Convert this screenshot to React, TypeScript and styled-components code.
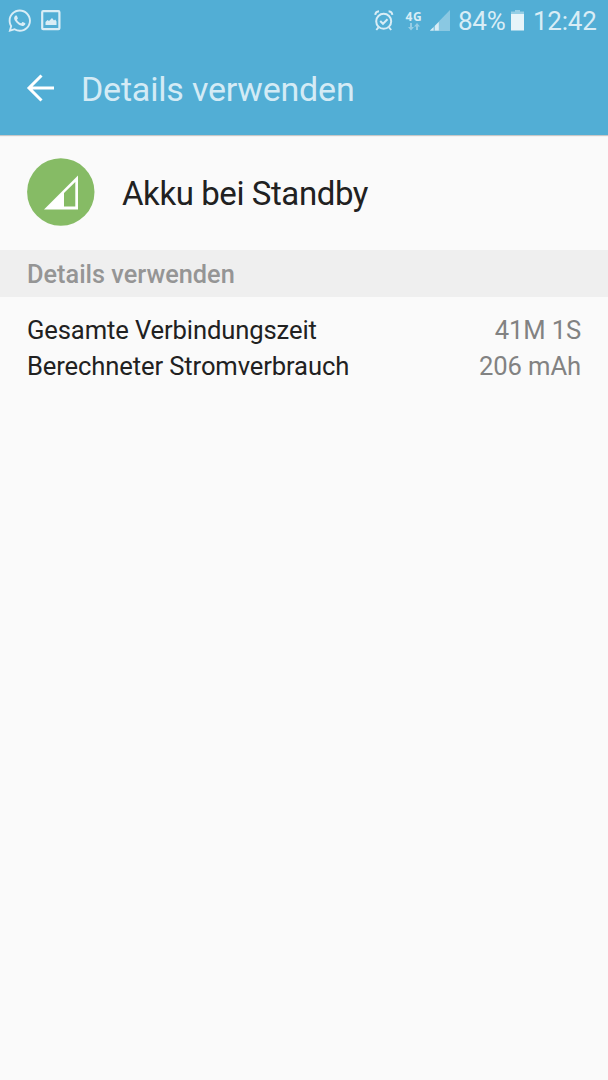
import React from 'react';
import styled, { createGlobalStyle } from 'styled-components';
import { FaWhatsapp } from 'react-icons/fa';

const GlobalStyle = createGlobalStyle`
  * { box-sizing: border-box; }
  body { margin: 0; background: #fafafa; font-family: Roboto, 'Liberation Sans', sans-serif; }
`;

const Screen = styled.main`
  display: flex;
  flex-direction: column;
  width: 608px;
  height: 1080px;
  overflow: hidden;
  background: #fafafa;
  white-space: nowrap;
`;

const Header = styled.header`
  flex: none;
  height: 135px;
  background: #52aed5;
  box-shadow: 0 1px 1px rgba(0, 0, 0, 0.2);
`;

const StatusBar = styled.div`
  display: flex;
  justify-content: space-between;
  height: 42px;
  padding: 0 12px 0 7px;
  color: #d9edf6;
`;

const StatusGroup = styled.div`
  display: flex;
  align-items: center;
  height: 41px;
  svg { display: block; flex: none; }
`;

const PhotoIcon = styled.svg`
  margin: 0 0 1px 8px;
`;

const Network = styled.div`
  display: flex;
  flex-direction: column;
  align-items: center;
  width: 18px;
  margin: 0 7px 0 11px;
  font: 700 12px/13px 'Open Sans', sans-serif;
  letter-spacing: 0.6px;
`;

const StatusText = styled.span<{ $width: number }>`
  width: ${({ $width }) => $width}px;
  font-size: 26px;
  line-height: 30px;
  letter-spacing: -0.25px;
  padding-top: 1px;
`;

const AppBar = styled.div`
  display: flex;
  align-items: center;
  height: 93px;
  padding-left: 26px;
`;

const BackButton = styled.button`
  display: flex;
  width: 55px;
  padding: 0 0 1px;
  border: 0;
  background: none;
`;

const Title = styled.h1`
  margin: 0;
  font-size: 34px;
  line-height: 40px;
  font-weight: 400;
  letter-spacing: -0.2px;
  color: #d4ebf5;
`;

const AppEntry = styled.section`
  display: flex;
  align-items: center;
  flex: none;
  height: 115px;
  padding: 0 0 1px 27px;
  gap: 27px;
`;

const AppName = styled.h2`
  margin: 3px 0 0;
  font-size: 33px;
  line-height: 38px;
  font-weight: 400;
  letter-spacing: -0.42px;
  color: #212121;
`;

const SectionHeading = styled.h3`
  flex: none;
  height: 47px;
  margin: 0;
  padding: 2px 27px 0;
  background: #efefef;
  color: #959595;
  font-size: 25.3px;
  line-height: 46px;
  font-weight: 500;
`;

const Details = styled.dl`
  margin: 0;
  padding: 15px 27px 0;
`;

const DetailRow = styled.div`
  display: flex;
  justify-content: space-between;
  font-size: 25.6px;
  line-height: 36px;
  letter-spacing: -0.12px;
`;

const Label = styled.dt`
  color: #212121;
`;

const Value = styled.dd`
  margin: 0;
  color: #828282;
`;

const rows = [
  { label: 'Gesamte Verbindungszeit', value: '41M 1S' },
  { label: 'Berechneter Stromverbrauch', value: '206 mAh' },
];

export default function App() {
  return (
    <Screen>
      <GlobalStyle />
      <Header>
        <StatusBar>
          <StatusGroup>
            <FaWhatsapp size={25.5} />
            <PhotoIcon width="20" height="22" viewBox="0 0 20 22">
              <rect x="1.2" y="2.2" width="17.2" height="18" rx="1" fill="none" stroke="currentColor" strokeWidth="2.2" />
              <path d="M4.5 16v-3l2-2 1.5 1 3-3 2 2.5 1.2-1 1.3 2V16z" fill="currentColor" />
            </PhotoIcon>
          </StatusGroup>
          <StatusGroup>
            <svg width="20" height="24" viewBox="0 0 20 24" fill="none" stroke="currentColor">
              <circle cx="9.7" cy="12.3" r="7.5" strokeWidth="2" />
              <path d="M6.2 12l2.8 2.8 4.5-4.5" strokeWidth="2" />
              <path d="M1.2 5.8Q1.5 2.5 5 2.2M18.4 5.8Q18.1 2.5 14.6 2.2M4.5 18.3L2.3 21M15 18.3l2.2 2.7" strokeWidth="1.9" />
            </svg>
            <Network>
              <span>4G</span>
              <svg width="12" height="8" viewBox="0 0 12 8" fill="currentColor" opacity="0.5">
                <path d="M2 0h2v4h2L3 7.5 0 4h2zM8 7h2V3.5h2L9 0 6 3.5h2z" />
              </svg>
            </Network>
            <svg width="28" height="21" viewBox="0 0 28 21">
              <path d="M-0.5 21L20 0v21z" fill="currentColor" opacity="0.42" />
              <path d="M0 20.5L3.5 17.2v3.3zM5 20.5v-4.7l3.8-3.9v8.6z" fill="currentColor" />
            </svg>
            <StatusText $width={53}>84%</StatusText>
            <svg width="22" height="21" viewBox="0 0 22 21" fill="currentColor">
              <path d="M4 0h5v1.5h4V4H0V1.5h4z" opacity="0.5" />
              <path d="M0 4h13v16.5H0z" fill="#e7f4f9" />
            </svg>
            <StatusText $width={63}>12:42</StatusText>
          </StatusGroup>
        </StatusBar>
        <AppBar>
          <BackButton aria-label="Zurück">
            <svg width="30" height="28" viewBox="0 0 30 28" fill="none" stroke="#fff" strokeWidth="3">
              <path d="M28 14H3M15.5 1.5L3 14l12.5 12.5" />
            </svg>
          </BackButton>
          <Title>Details verwenden</Title>
        </AppBar>
      </Header>
      <AppEntry>
        <svg width="68" height="68" viewBox="0 0 68 68">
          <circle cx="33.8" cy="34" r="33.7" fill="#86bb65" />
          <path fillRule="evenodd" fill="#fff" d="M17 51.5L51 17.5v34zM37 35V48.5h11.3V24z" />
        </svg>
        <AppName>Akku bei Standby</AppName>
      </AppEntry>
      <SectionHeading>Details verwenden</SectionHeading>
      <Details>
        {rows.map((row) => (
          <DetailRow key={row.label}>
            <Label>{row.label}</Label>
            <Value>{row.value}</Value>
          </DetailRow>
        ))}
      </Details>
    </Screen>
  );
}
